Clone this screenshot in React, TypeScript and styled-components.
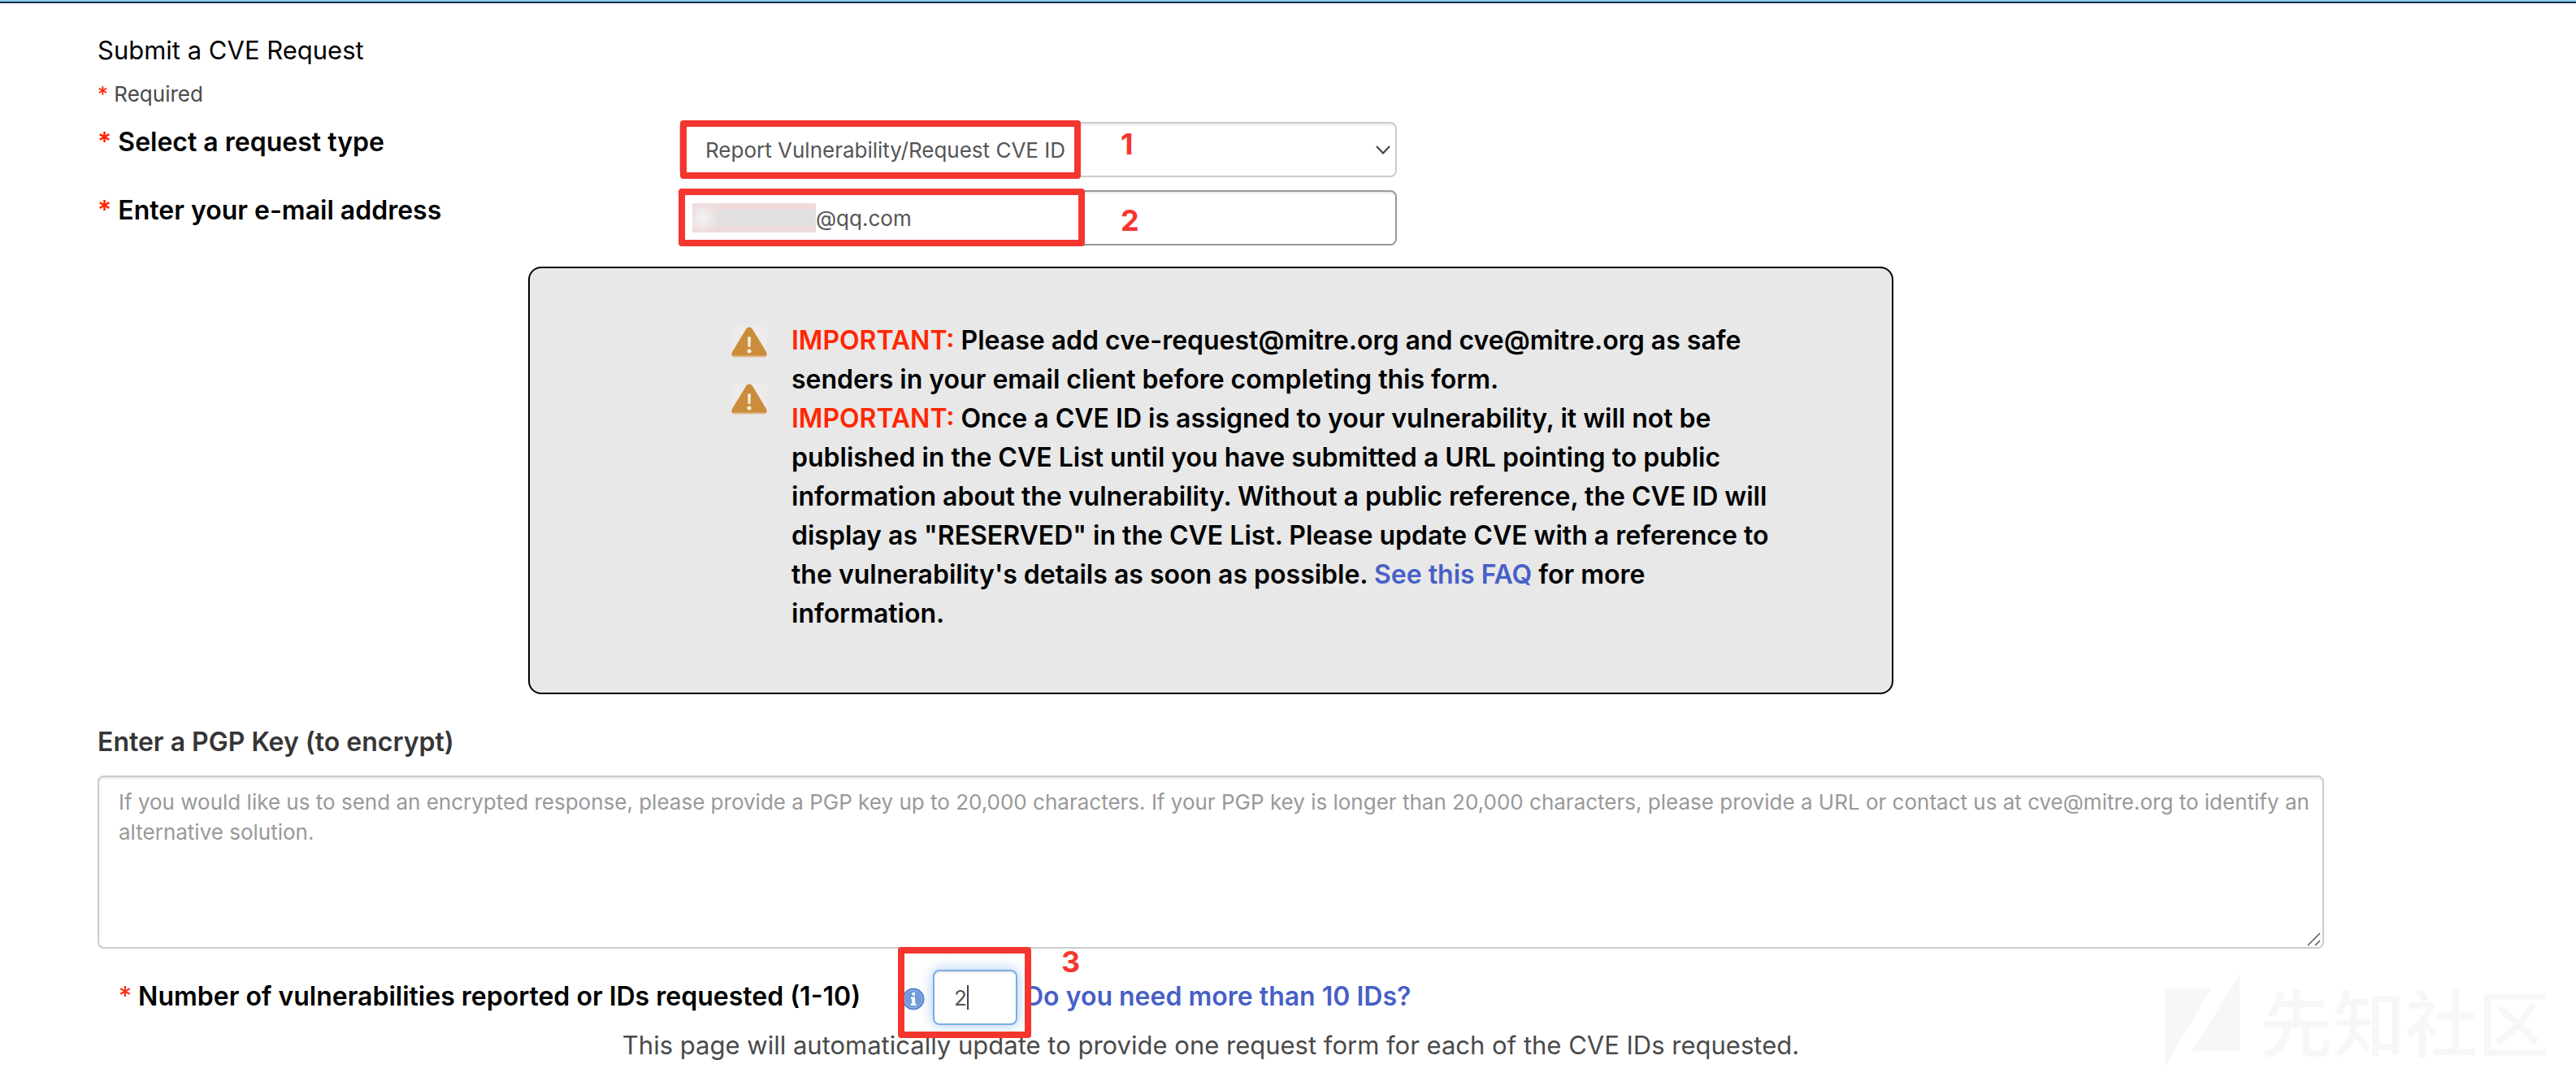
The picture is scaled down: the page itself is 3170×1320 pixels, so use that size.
import React, { useState } from 'react';
import styled, { createGlobalStyle, css } from 'styled-components';

const RED = '#f4362f';
const FONT = 'Inter, "Noto Sans CJK SC", sans-serif';

const GlobalStyle = createGlobalStyle`
  *, *::before, *::after { box-sizing: border-box; }
  body {
    margin: 0;
    background: #fff;
    color: #000;
    font-family: ${FONT};
    font-size: 32px;
    line-height: 48px;
  }
`;

const Page = styled.div`
  position: relative;
  min-height: 100vh;
  border-top: 2px solid #8acdea;
  overflow: hidden;
`;

const Rule = styled.div`
  height: 2px;
  background: #1c2f52;
`;

const Form = styled.form`
  display: flex;
  flex-direction: column;
  padding: 34px 310px 0 120px;
`;

const Title = styled.h1`
  margin: 0 0 10px;
  font-size: 31px;
  line-height: 48px;
  font-weight: 400;
`;

const Note = styled.p`
  margin: 0 0 14px;
  font-size: 26px;
  line-height: 40px;
  color: #4a4a4a;
`;

const Star = styled.span`
  color: #ff2600;
`;

const FieldRows = styled.div`
  display: grid;
  grid-template-columns: 716px minmax(0, 883px);
  row-gap: 16px;
`;

const Label = styled.label`
  font-size: 32px;
  font-weight: 600;
  line-height: 50px;
`;

const Field = styled.div`
  position: relative;
`;

const control = css`
  display: block;
  width: 100%;
  height: 68px;
  margin: 0;
  border: 2px solid #ccc;
  border-radius: 8px;
  background: #fff;
  box-shadow: inset 0 2px 2px rgba(0, 0, 0, 0.075);
  color: #555;
  font: 400 26px/37px ${FONT};
  outline: none;
`;

const Select = styled.select`
  ${control}
  appearance: none;
  padding: 0 48px 0 30px;
`;

const EmailInput = styled.input`
  ${control}
  border-color: #999;
  padding: 0 24px 0 166px;
`;

const Chevron = styled.svg`
  position: absolute;
  right: 7px;
  top: 28px;
  width: 20px;
  height: 13px;
  pointer-events: none;
`;

const Redaction = styled.span`
  position: absolute;
  left: 16px;
  top: 16px;
  width: 152px;
  height: 36px;
  background:
    radial-gradient(ellipse 18px 20px at 14px 18px, #f1efef 20%, rgba(241, 239, 239, 0)),
    linear-gradient(90deg, rgba(224, 224, 224, 0), #e0e0e0 50px) 0 8px / 152px 20px no-repeat,
    #efdbdc;
`;

const Mark = styled.span<{ $x: number; $y: number; $w: number; $h: number }>`
  position: absolute;
  left: ${(p) => p.$x}px;
  top: ${(p) => p.$y}px;
  width: ${(p) => p.$w}px;
  height: ${(p) => p.$h}px;
  border: 8px solid ${RED};
  border-radius: 4px;
  pointer-events: none;
`;

const MarkNumber = styled.span<{ $x: number; $y: number }>`
  position: absolute;
  left: ${(p) => p.$x}px;
  top: ${(p) => p.$y}px;
  color: ${RED};
  font-size: 36px;
  line-height: 40px;
  font-weight: 700;
  pointer-events: none;
`;

const Notice = styled.section`
  display: flex;
  gap: 30px;
  width: 100%;
  max-width: 1680px;
  margin: 26px auto 34px;
  padding: 65px 130px 73px 248px;
  border: 2px solid #000;
  border-radius: 16px;
  background: #e8e8e8;
`;

const Icons = styled.div`
  display: flex;
  flex-direction: column;
  gap: 32px;
  padding-top: 7px;

  svg {
    display: block;
    width: 44px;
    height: 38px;
  }
`;

const NoticeText = styled.div`
  flex: 1;
  font-size: 32px;
  font-weight: 600;

  p { margin: 0; }
`;

const Link = styled.a`
  color: #485fc7;
  font-weight: 600;
  text-decoration: none;
`;

const PgpLabel = styled(Label)`
  margin-bottom: 16px;
  color: #363636;
`;

const TextArea = styled.textarea`
  ${control}
  height: 213px;
  padding: 12px 8px 12px 24px;
  resize: none;

  &::placeholder {
    color: #999;
    opacity: 1;
  }
`;

const Grip = styled.svg`
  position: absolute;
  right: 3px;
  bottom: 3px;
  width: 18px;
  height: 17px;
  pointer-events: none;
`;

const CountRow = styled.div`
  display: flex;
  position: relative;
  margin-top: 26px;
  padding-left: 26px;
`;

const CountLabel = styled(Label)`
  width: 938px;
  padding-top: 8px;

  ${Star} { font-weight: 400; }
`;

const Info = styled.svg`
  width: 28px;
  height: 28px;
  margin: 22px 10px 0 26px;
`;

const CountField = styled(Field)`
  width: 104px;
`;

const CountInput = styled.input`
  ${control}
  padding: 0 24px;
  border-color: #7aaee4;
  box-shadow: inset 0 2px 2px rgba(0, 0, 0, 0.075), 0 0 16px rgba(102, 165, 233, 0.6);
`;

const Caret = styled.span`
  position: absolute;
  left: 42px;
  top: 19px;
  width: 2px;
  height: 30px;
  background: #444;
`;

const MoreLink = styled(Link)`
  padding: 8px 0 0 9px;
  font-size: 32px;
  line-height: 50px;
`;

const Help = styled.p`
  margin: 0;
  color: #4a4a4a;
  font-size: 31px;
  line-height: 50px;
  text-align: center;
`;

const Watermark = styled.div`
  position: absolute;
  right: 32px;
  bottom: 8px;
  display: flex;
  align-items: center;
  gap: 26px;
  color: #f7f7f7;
  font: 500 89px/114px "Noto Sans CJK SC", sans-serif;
  pointer-events: none;

  svg { display: block; width: 92px; height: 114px; }
`;

const Warning = () => (
  <svg viewBox="0 0 44 38" aria-hidden="true">
    <rect width="44" height="38" fill="#eeebea" />
    <path d="M22 0.5c2 0 3.2 1.2 4 2.600L43 31c1.500 3.500 0.500 6-3 6H4c-3.500 0-4.500-2.500-3-6L18 3.100C18.800 1.700 20 0.500 22 0.500z" fill="#cb8d3b" />
    <path d="M2 36.500h40" stroke="#e0b88a" strokeWidth="2" />
    <path d="M20 13q2-1.500 4 0l-0.600 12h-2.800z" fill="#f5ede4" />
    <circle cx="22" cy="30" r="2.500" fill="#f5ede4" />
  </svg>
);

export default function App() {
  const [email, setEmail] = useState('@qq.com');
  const [count, setCount] = useState('2');

  return (
    <Page>
      <GlobalStyle />
      <Rule />
      <Form>
        <Title>Submit a CVE Request</Title>
        <Note><Star>*</Star> Required</Note>

        <FieldRows>
          <Label htmlFor="type"><Star>*</Star> Select a request type</Label>
          <Field>
            <Select id="type">
              <option>Report Vulnerability/Request CVE ID</option>
            </Select>
            <Chevron viewBox="0 0 20 13" aria-hidden="true">
              <path d="M2 2l8 8.500L18 2" fill="none" stroke="#444" strokeWidth="2.200" />
            </Chevron>
            <Mark $x={1} $y={-2} $w={493} $h={72} />
            <MarkNumber $x={543} $y={7}>1</MarkNumber>
          </Field>

          <Label htmlFor="email"><Star>*</Star> Enter your e-mail address</Label>
          <Field>
            <EmailInput id="email" value={email} onChange={(e) => setEmail(e.target.value)} />
            <Redaction />
            <Mark $x={-1} $y={-2} $w={500} $h={71} />
            <MarkNumber $x={543} $y={17}>2</MarkNumber>
          </Field>
        </FieldRows>

        <Notice>
          <Icons><Warning /><Warning /></Icons>
          <NoticeText>
            <p>
              <Star>IMPORTANT:</Star> Please add cve-request@mitre.org and cve@mitre.org as safe
              senders in your email client before completing this form.
            </p>
            <p>
              <Star>IMPORTANT:</Star> Once a CVE ID is assigned to your vulnerability, it will not be
              published in the CVE List until you have submitted a URL pointing to public
              information about the vulnerability. Without a public reference, the CVE ID will
              display as "RESERVED" in the CVE List. Please update CVE with a reference to
              the vulnerability's details as soon as possible. <Link href="#faq">See this FAQ</Link> for
              more information.
            </p>
          </NoticeText>
        </Notice>

        <PgpLabel htmlFor="pgp">Enter a PGP Key (to encrypt)</PgpLabel>
        <Field>
          <TextArea
            id="pgp"
            placeholder="If you would like us to send an encrypted response, please provide a PGP key up to 20,000 characters. If your PGP key is longer than 20,000 characters, please provide a URL or contact us at cve@mitre.org to identify an alternative solution."
          />
          <Grip viewBox="0 0 18 17" aria-hidden="true">
            <path d="M1 16L16 1M10 16l6-6" fill="none" stroke="#555" strokeWidth="1.500" />
          </Grip>
        </Field>

        <CountRow>
          <CountLabel htmlFor="count">
            <Star>*</Star> Number of vulnerabilities reported or IDs requested (1-10)
          </CountLabel>
          <Info viewBox="0 0 28 28" aria-hidden="true">
            <circle cx="14" cy="14" r="13.500" fill="#5b84cf" />
            <circle cx="14" cy="14" r="11" fill="#6f9bdc" stroke="#9dbcea" />
            <path d="M12.500 6h3.500v3.500h-3.500zM11 11.500h5v8h1.500v2.500h-7v-2.500h1.700v-5.500H11z" fill="#fff" />
          </Info>
          <CountField>
            <CountInput id="count" value={count} onChange={(e) => setCount(e.target.value)} />
            <Caret />
          </CountField>
          <MoreLink href="#more">Do you need more than 10 IDs?</MoreLink>
          <Mark $x={985} $y={-28} $w={164} $h={112} />
          <MarkNumber $x={1186} $y={-30}>3</MarkNumber>
        </CountRow>
        <Help>This page will automatically update to provide one request form for each of the CVE IDs requested.</Help>
      </Form>

      <Watermark>
        <svg viewBox="0 0 92 114" aria-hidden="true">
          <path d="M0 18h57L0 114zM92 0v95H34z" fill="#f7f7f7" />
        </svg>
        先知社区
      </Watermark>
    </Page>
  );
}
